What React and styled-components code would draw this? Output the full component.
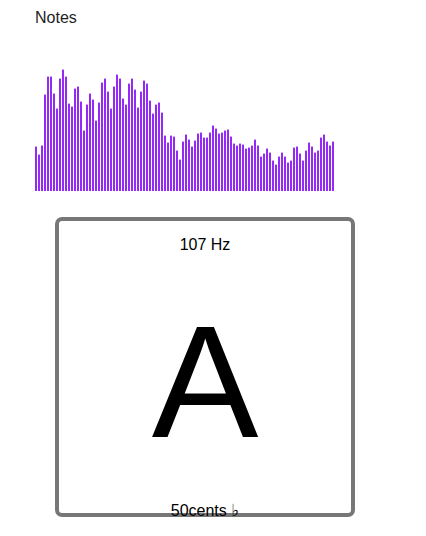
import React from 'react';
import styled, { createGlobalStyle } from 'styled-components';

const levels = [
  44, 36, 45, 96, 114, 114, 97, 82, 112, 121, 114, 87, 84, 102, 104, 89, 60,
  86, 97, 91, 70, 88, 108, 112, 99, 82, 104, 116, 112, 92, 86, 107, 112, 101,
  83, 99, 110, 107, 90, 77, 86, 88, 78, 55, 48, 55, 54, 40, 31, 49, 56,
  51, 44, 50, 57, 58, 53, 53, 58, 65, 62, 57, 58, 60, 61, 54, 47, 45,
  47, 46, 42, 43, 45, 51, 45, 34, 37, 42, 38, 30, 26, 34, 38, 34, 28,
  30, 43, 44, 37, 30, 40, 48, 44, 38, 40, 53, 56, 49, 45, 49,
];

const CHART_H = 125;

export default function App() {
  return (
    <>
      <GlobalStyle />
      <Page>
        <Title>Notes</Title>
        <Chart width={levels.length * 3} height={CHART_H}>
          {levels.map((h, i) => (
            <rect key={i} x={i * 3} y={CHART_H - h - 0.4} width={2} height={h + 0.4} fill="#952af5" />
          ))}
        </Chart>
        <NoteCard>
          <Freq>107 Hz</Freq>
          <NoteName>A</NoteName>
          <Cents>50cents <Flat>{'\u266D\uFE0E'}</Flat></Cents>
        </NoteCard>
      </Page>
    </>
  );
}

const GlobalStyle = createGlobalStyle`
  body {
    margin: 0;
    background: #fff;
    font-family: "Liberation Sans", Arial, sans-serif;
    color: #1d1d1f;
  }
`;

const Page = styled.div`
  display: flex;
  flex-direction: column;
  align-items: flex-start;
  padding: 8px 0 0 35px;
`;

const Title = styled.div`
  font-size: 16px;
  line-height: 19px;
`;

const Chart = styled.svg`
  display: block;
  margin-top: 39px;
`;

const NoteCard = styled.div`
  box-sizing: border-box;
  width: 300px;
  height: 300px;
  margin: 26px 0 0 20px;
  border: 4px solid #777;
  border-radius: 7px;
  display: flex;
  flex-direction: column;
  align-items: center;
  color: #000;
`;

const Freq = styled.div`
  font-size: 16px;
  line-height: 18px;
  margin-top: 15px;
`;

const NoteName = styled.div`
  font-size: 160px;
  line-height: 1;
  margin-top: 48px;
`;

const Cents = styled.div`
  font-size: 16px;
  line-height: 18px;
  margin-top: auto;
  margin-bottom: -7px;
`;

const Flat = styled.span`
  font-family: "DejaVu Sans", "Liberation Sans", sans-serif;
  font-size: 17px;
  color: #000;
`;
